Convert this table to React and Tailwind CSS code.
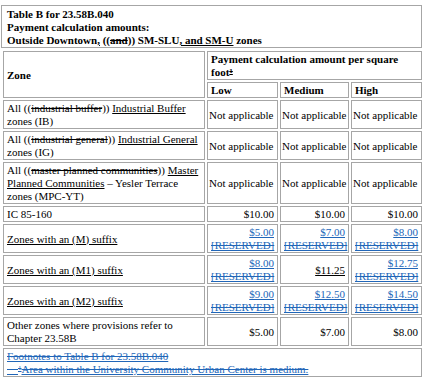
const INS = 'underline';
const DEL = 'line-through';
const BOTH = '[text-decoration-line:underline_line-through]';

function Blue({ value, reserved = true }) {
  return (
    <div className="text-[#2166b8]">
      <div className="underline">{value}</div>
      {reserved && <div className={BOTH}>[RESERVED]</div>}
    </div>
  );
}

const cell = 'border border-[#a6a6a6] px-[3px] pt-[1px] pb-0 align-middle';
const na = 'border border-[#a6a6a6] px-[1px] pt-[1px] pb-0 align-middle whitespace-nowrap';

export default function App() {
  return (
    <div className="min-h-[387px] bg-white pt-[5px] font-['Liberation_Serif',serif] text-[11px] leading-[13px] text-black">
      <div className="ml-[1px] w-[421px] border border-[#a6a6a6] px-[5px] pb-0 pt-[2px] font-bold">
        <div>Table B for 23.58B.040</div>
        <div>Payment calculation amounts:</div>
        <div>
          Outside Downtown<span className={INS}>,</span> ((<span className={DEL}>and</span>)) SM-SLU
          <span className={INS}>, and SM-U</span> zones
        </div>
      </div>

      <table className="mt-[1px] ml-[1px] w-[423px] table-fixed border-separate border-spacing-[2px]">
        <colgroup>
          <col className="w-[202px]" />
          <col className="w-[71px]" />
          <col className="w-[69px]" />
          <col className="w-[71px]" />
        </colgroup>
        <tbody>
          <tr>
            <td rowSpan={2} className={`${cell} font-bold`}>Zone</td>
            <td colSpan={3} className={`${cell} font-bold`}>
              Payment calculation amount per square foot
              <sup className={`text-[7px] ${BOTH}`}>1</sup>
            </td>
          </tr>
          <tr>
            <td className={`${cell} font-bold`}>Low</td>
            <td className={`${cell} font-bold`}>Medium</td>
            <td className={`${cell} font-bold`}>High</td>
          </tr>
          <tr>
            <td className={cell}>
              All ((<span className={DEL}>industrial buffer</span>)) <span className={INS}>Industrial Buffer</span> zones (IB)
            </td>
            <td className={na}>Not applicable</td>
            <td className={na}>Not applicable</td>
            <td className={na}>Not applicable</td>
          </tr>
          <tr>
            <td className={cell}>
              All ((<span className={DEL}>industrial general</span>)) <span className={INS}>Industrial General</span> zones (IG)
            </td>
            <td className={na}>Not applicable</td>
            <td className={na}>Not applicable</td>
            <td className={na}>Not applicable</td>
          </tr>
          <tr>
            <td className={cell}>
              All ((<span className={DEL}>master planned communities</span>)) <span className={INS}>Master Planned Communities</span> – Yesler Terrace zones (MPC-YT)
            </td>
            <td className={na}>Not applicable</td>
            <td className={na}>Not applicable</td>
            <td className={na}>Not applicable</td>
          </tr>
          <tr>
            <td className={cell}>IC 85-160</td>
            <td className={`${cell} text-right`}>$10.00</td>
            <td className={`${cell} text-right`}>$10.00</td>
            <td className={`${cell} text-right`}>$10.00</td>
          </tr>
          <tr>
            <td className={cell}><span className={INS}>Zones with an (M) suffix</span></td>
            <td className={`${cell} text-right`}><Blue value="$5.00" /></td>
            <td className={`${cell} text-right`}><Blue value="$7.00" /></td>
            <td className={`${cell} text-right`}><Blue value="$8.00" /></td>
          </tr>
          <tr>
            <td className={cell}><span className={INS}>Zones with an (M1) suffix</span></td>
            <td className={`${cell} text-right`}><Blue value="$8.00" /></td>
            <td className={`${cell} text-right`}><span className={INS}>$11.25</span></td>
            <td className={`${cell} text-right`}><Blue value="$12.75" /></td>
          </tr>
          <tr>
            <td className={cell}><span className={INS}>Zones with an (M2) suffix</span></td>
            <td className={`${cell} text-right`}><Blue value="$9.00" /></td>
            <td className={`${cell} text-right`}><Blue value="$12.50" /></td>
            <td className={`${cell} text-right`}><Blue value="$14.50" /></td>
          </tr>
          <tr>
            <td className={cell}>Other zones where provisions refer to Chapter 23.58B</td>
            <td className={`${cell} text-right`}>$5.00</td>
            <td className={`${cell} text-right`}>$7.00</td>
            <td className={`${cell} text-right`}>$8.00</td>
          </tr>
          <tr>
            <td colSpan={4} className={`${cell} text-[#2166b8]`}>
              <div className={BOTH}>Footnotes to Table B for 23.58B.040</div>
              <div>
                <span className={BOTH}>{'\u00a0\u00a0\u00a0\u00a0'}</span>
                <sup className={`text-[7px] ${BOTH}`}>1</sup>
                <span className={BOTH}>Area within the University Community Urban Center is medium.</span>
              </div>
            </td>
          </tr>
        </tbody>
      </table>
    </div>
  );
}
